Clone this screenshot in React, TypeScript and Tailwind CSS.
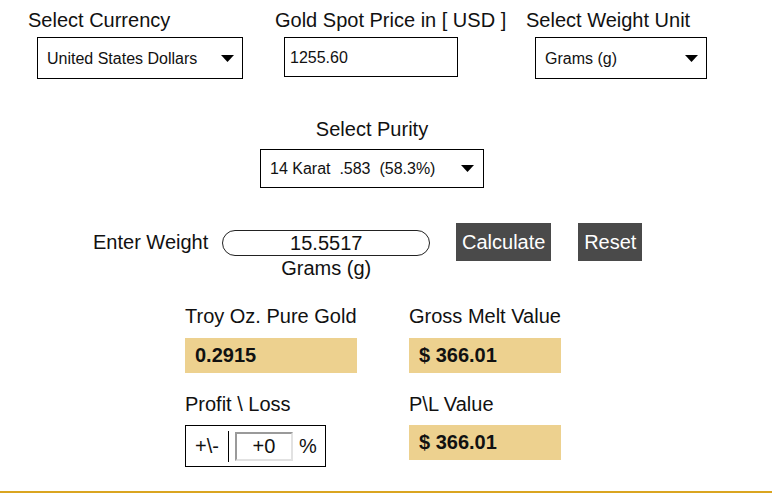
import React from "react";

function Arrow() {
  return (
    <svg width="13" height="7" viewBox="0 0 13 7" aria-hidden>
      <path d="M0 0H13L6.5 7Z" fill="#000" />
    </svg>
  );
}

function SelectBox({ value, width, height = "h-[42px]" }: { value: string; width: string; height?: string }) {
  return (
    <div
      className={`ml-[9px] mt-[5px] flex ${width} ${height} items-center justify-between border border-black pl-[9px] pr-[8px] text-[16px] whitespace-pre`}
    >
      <span>{value}</span>
      <Arrow />
    </div>
  );
}

export default function App() {
  return (
    <main className="flex h-[493px] w-[772px] flex-col bg-white font-['Liberation_Sans',Arial,sans-serif] text-[20px] leading-[23px] text-[#111]">
      {/* top selectors */}
      <section className="flex pl-[28px] pt-[9px]">
        <div className="w-[247px]">
          <div>Select Currency</div>
          <SelectBox value="United States Dollars" width="w-[206px]" />
        </div>
        <div className="w-[251px]">
          <div>Gold Spot Price in [ USD ]</div>
          <div className="ml-[9px] mt-[5px] flex h-[40px] w-[174px] items-center border border-black pl-[5px] text-[16px]">
            1255.60
          </div>
        </div>
        <div>
          <div>Select Weight Unit</div>
          <SelectBox value="Grams (g)" width="w-[172px]" />
        </div>
      </section>

      {/* purity */}
      <section className="ml-[260px] mt-[39px] flex w-[224px] flex-col items-center">
        <div>Select Purity</div>
        <div className="mt-[8px] flex h-[39px] w-[224px] items-center justify-between border border-black pl-[9px] pr-[9px] text-[16px] whitespace-pre">
          <span>14 Karat  .583  (58.3%)</span>
          <Arrow />
        </div>
      </section>

      {/* weight */}
      <section className="mt-[35px] flex items-start pl-[93px]">
        <div className="mt-[8px]">Enter Weight</div>
        <div className="ml-[14px] mt-[7px] flex w-[208px] flex-col items-center">
          <div className="flex h-[26px] w-[208px] items-center justify-center rounded-full border border-[#222]">
            15.5517
          </div>
          <div className="mt-[1px]">Grams (g)</div>
        </div>
        <button className="ml-[26px] h-[38px] w-[95px] bg-[#4a4a4a] text-white">Calculate</button>
        <button className="ml-[27px] h-[38px] w-[64px] bg-[#4a4a4a] text-white">Reset</button>
      </section>

      {/* results */}
      <section className="mt-[25px] grid grid-cols-[224px_152px] pl-[185px]">
        <div>
          <div>Troy Oz. Pure Gold</div>
          <div className="mt-[10px] flex h-[35px] w-[172px] items-center bg-[#edd18f] pl-[10px] font-bold">0.2915</div>
        </div>
        <div>
          <div>Gross Melt Value</div>
          <div className="mt-[10px] flex h-[35px] w-[152px] items-center bg-[#edd18f] pl-[10px] font-bold">$ 366.01</div>
        </div>
        <div className="mt-[20px]">
          <div>Profit \ Loss</div>
          <div className="mt-[9px] flex h-[42px] w-[141px] items-center border border-black pl-[9px]">
            <span>+\-</span>
            <span className="ml-[9px] h-[31px] w-px bg-black" />
            <div className="ml-[6px] flex h-[29px] w-[58px] items-center justify-center border-2 border-t-[#9a9a9a] border-l-[#9a9a9a] border-b-[#e2e2e2] border-r-[#e2e2e2]">
              +0
            </div>
            <span className="ml-[6px]">%</span>
          </div>
        </div>
        <div className="mt-[20px]">
          <div>P\L Value</div>
          <div className="mt-[9px] flex h-[35px] w-[152px] items-center bg-[#edd18f] pl-[10px] font-bold">$ 366.01</div>
        </div>
      </section>

      <div className="mt-auto h-[2px] w-full shrink-0 bg-[#daa520]" />
    </main>
  );
}
